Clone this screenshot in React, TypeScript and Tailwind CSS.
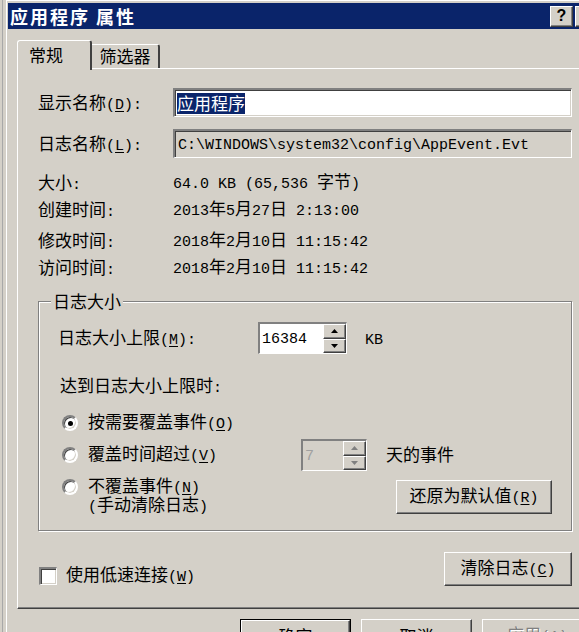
import React from "react";

const MONO = "font-[family-name:'Liberation_Mono',monospace] text-[15px]";
const HAN = "font-[family-name:'Noto_Sans_CJK_SC',sans-serif] text-[17px]";

const RAISED =
  "border border-t-white border-l-white border-r-[#404040] border-b-[#404040] shadow-[inset_-1px_-1px_#808080]";
const SUNKEN =
  "border-t-2 border-l-2 border-r border-b border-t-[#808080] border-l-[#808080] border-r-white border-b-white shadow-[inset_1px_1px_#404040,inset_-1px_-1px_#d4d0c8]";

const Acc = ({ s }: { s: string }) => {
  const i = s.indexOf("&");
  if (i < 0) return <>{s}</>;
  return (
    <>
      {s.slice(0, i)}
      <span className="underline underline-offset-[2px]">{s[i + 1]}</span>
      {s.slice(i + 2)}
    </>
  );
};

// mixes half-width ascii runs (mono) with CJK runs, like SimSun does
const Txt = ({ s, className = "" }: { s: string; className?: string }) => {
  const parts = s.split(/([\x20-\x7e]+)/).filter((p) => p !== "");
  return (
    <span className={`whitespace-pre leading-[18px] ${className}`}>
      {parts.map((p, i) =>
        /^[\x20-\x7e]+$/.test(p) ? (
          <span key={i} className={MONO}>
            <Acc s={p} />
          </span>
        ) : (
          <span key={i} className={HAN}>
            {p}
          </span>
        )
      )}
    </span>
  );
};

const Arrow = ({ up, dim }: { up?: boolean; dim?: boolean }) => (
  <svg width="7" height="4" viewBox="0 0 7 4">
    <polygon
      points={up ? "3.5,0 7,4 0,4" : "0,0 7,0 3.5,4"}
      fill={dim ? "#808080" : "#000"}
    />
  </svg>
);

const Spin = ({
  value,
  width,
  disabled,
}: {
  value: string;
  width: string;
  disabled?: boolean;
}) => (
  <div className={`flex h-[32px] ${width} ${SUNKEN}`}>
    <div
      className={`flex-1 flex items-center pl-[2px] ${
        disabled ? "bg-[#d4d0c8] text-[#a0a0a0]" : "bg-white text-black"
      }`}
    >
      <Txt s={value} />
    </div>
    <div className="w-[23px] flex flex-col bg-[#d4d0c8]">
      <div className={`flex-1 flex items-center justify-center ${RAISED}`}>
        <Arrow up dim={disabled} />
      </div>
      <div className={`flex-1 flex items-center justify-center ${RAISED}`}>
        <Arrow dim={disabled} />
      </div>
    </div>
  </div>
);

const Radio = ({ checked }: { checked?: boolean }) => (
  <div className="w-[16px] h-[16px] rounded-full bg-white border-2 border-t-[#808080] border-l-[#808080] border-r-white border-b-white shadow-[inset_1px_1px_#404040,inset_-1px_-1px_#d4d0c8] flex items-center justify-center shrink-0">
    {checked && <div className="w-[5px] h-[5px] rounded-full bg-black" />}
  </div>
);

const Button = ({
  label,
  className = "",
  isDefault,
  disabled,
}: {
  label: string;
  className?: string;
  isDefault?: boolean;
  disabled?: boolean;
}) => (
  <div className={`shrink-0 ${isDefault ? "border border-black" : ""} ${className}`}>
    <div
      className={`h-full flex items-center justify-center bg-[#d4d0c8] ${RAISED} ${
        disabled ? "text-[#808080] [text-shadow:1px_1px_#ffffff]" : "text-black"
      }`}
    >
      <Txt s={label} />
    </div>
  </div>
);

const InfoRow = ({ label, value }: { label: string; value: string }) => (
  <div className="flex items-center h-[27px]">
    <div className="w-[135px]">
      <Txt s={label} />
    </div>
    <Txt s={value} />
  </div>
);

export default function App() {
  return (
    <div className="w-[579px] h-[632px] overflow-hidden bg-[#d4d0c8] flex items-start text-black">
      <div className="w-[6px] h-[632px] shrink-0 flex">
        <div className="w-[2px]" />
        <div className="w-[1px] bg-[#a8a8a8]" />
      </div>

      <div className="w-[597px] shrink-0 flex flex-col border-t border-l border-white pt-[2px] pl-[1px] pr-[2px]">
        <div className="h-[26px] shrink-0 bg-[#0a246a] flex items-center justify-between pl-[2px] pr-[3px]">
          <span className="text-white font-bold text-[18px] tracking-[2px] font-[family-name:'Noto_Sans_CJK_SC',sans-serif]">
            应用程序 属性
          </span>
          <div className="flex gap-[2px]">
            <div
              className={`w-[23px] h-[21px] bg-[#d4d0c8] flex items-center justify-center ${RAISED}`}
            >
              <span className="font-[family-name:'Liberation_Sans',sans-serif] font-bold text-[16px] leading-none">
                ?
              </span>
            </div>
            <div className={`w-[23px] h-[21px] bg-[#d4d0c8] ${RAISED}`} />
          </div>
        </div>

        <div className="pl-[9px] pr-[8px] flex flex-col">
          <div className="mt-[11px] h-[28px] flex items-end">
            <div className="relative z-10 -mb-[2px] h-[30px] w-[75px] bg-[#d4d0c8] border-t border-l border-white border-r-2 border-r-[#404040] rounded-tl-[3px] rounded-tr-[3px] flex items-center pl-[11px]">
              <Txt s="常规" />
            </div>
            <div className="h-[24px] w-[70px] -ml-[2px] border-t border-white border-r-2 border-r-[#404040] rounded-tr-[3px] flex items-center justify-center pl-[2px]">
              <Txt s="筛选器" />
            </div>
          </div>

          <div className="border border-t-white border-l-white border-r-[#404040] border-b-[#404040] shadow-[inset_-1px_-1px_#808080] pl-[20px] pr-[20px] pt-[19px] pb-[21px] flex flex-col">
            <div className="flex items-center h-[29px]">
              <div className="w-[135px]">
                <Txt s="显示名称(&D):" />
              </div>
              <div className={`flex-1 h-full bg-white flex items-center pl-[2px] ${SUNKEN}`}>
                <span className="bg-[#0a246a] text-white h-[21px] flex items-center">
                  <Txt s="应用程序" />
                </span>
              </div>
            </div>

            <div className="flex items-center h-[29px] mt-[12px]">
              <div className="w-[135px]">
                <Txt s="日志名称(&L):" />
              </div>
              <div className={`flex-1 h-full bg-[#d4d0c8] flex items-center pl-[3px] ${SUNKEN}`}>
                <Txt s="C:\WINDOWS\system32\config\AppEvent.Evt" />
              </div>
            </div>

            <div className="mt-[11px] flex flex-col">
              <InfoRow label="大小:" value="64.0 KB (65,536 字节)" />
              <InfoRow label="创建时间:" value="2013年5月27日 2:13:00" />
              <div className="h-[4px]" />
              <InfoRow label="修改时间:" value="2018年2月10日 11:15:42" />
              <InfoRow label="访问时间:" value="2018年2月10日 11:15:42" />
            </div>

            <fieldset className="mt-[10px] border border-[#808080] shadow-[inset_1px_1px_#ffffff,1px_1px_#ffffff] p-0 m-0 min-w-0">
              <legend className="ml-[12px] px-[2px] bg-[#d4d0c8] h-[20px] flex items-center">
                <Txt s="日志大小" />
              </legend>
              <div className="pl-[19px] pr-[19px] pb-[15px] flex flex-col">
                <div className="mt-[11px] h-[32px] flex items-center">
                  <div className="w-[200px]">
                    <Txt s="日志大小上限(&M):" />
                  </div>
                  <Spin value="16384" width="w-[89px]" />
                  <div className="ml-[18px]">
                    <Txt s="KB" />
                  </div>
                </div>

                <div className="mt-[21px] h-[24px] flex items-center pl-[2px]">
                  <Txt s="达到日志大小上限时:" />
                </div>

                <div className="mt-[12px] h-[24px] flex items-center pl-[4px] gap-[10px]">
                  <Radio checked />
                  <Txt s="按需要覆盖事件(&O)" />
                </div>

                <div className="mt-[4px] h-[32px] flex items-center">
                  <div className="w-[243px] flex items-center pl-[4px] gap-[10px]">
                    <Radio />
                    <Txt s="覆盖时间超过(&V)" />
                  </div>
                  <Spin value="7" width="w-[66px]" disabled />
                  <div className="ml-[19px]">
                    <Txt s="天的事件" />
                  </div>
                </div>

                <div className="mt-[6px] flex items-start justify-between">
                  <div className="flex pl-[4px] gap-[10px]">
                    <div className="h-[20px] flex items-center">
                      <Radio />
                    </div>
                    <div className="flex flex-col">
                      <div className="h-[19px] flex items-center">
                        <Txt s="不覆盖事件(&N)" />
                      </div>
                      <div className="h-[19px] flex items-center">
                        <Txt s="(手动清除日志)" />
                      </div>
                    </div>
                  </div>
                  <Button label="还原为默认值(&R)" className="mt-[3px] w-[156px] h-[34px]" />
                </div>
              </div>
            </fieldset>

            <div className="mt-[21px] flex items-start justify-between">
              <div className="mt-[13px] flex items-center gap-[9px] pl-[1px]">
                <div className={`w-[18px] h-[18px] bg-white ${SUNKEN}`} />
                <Txt s="使用低速连接(&W)" />
              </div>
              <Button label="清除日志(&C)" className="w-[128px] h-[34px]" />
            </div>
          </div>

          <div className="mt-[10px] flex justify-end gap-[10px]">
            <Button label="确定" isDefault className="w-[111px] h-[34px]" />
            <Button label="取消" className="w-[111px] h-[34px]" />
            <Button label="应用(&A)" disabled className="w-[111px] h-[34px]" />
          </div>
        </div>
      </div>
    </div>
  );
}
